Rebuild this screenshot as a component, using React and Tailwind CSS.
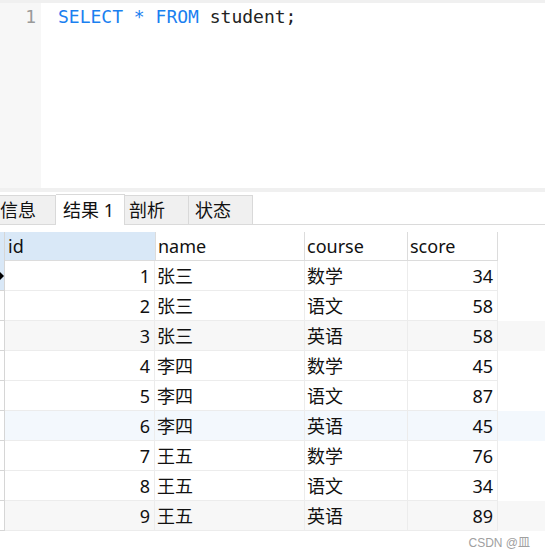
const rows = [
  { id: 1, name: '张三', course: '数学', score: 34 },
  { id: 2, name: '张三', course: '语文', score: 58 },
  { id: 3, name: '张三', course: '英语', score: 58 },
  { id: 4, name: '李四', course: '数学', score: 45 },
  { id: 5, name: '李四', course: '语文', score: 87 },
  { id: 6, name: '李四', course: '英语', score: 45 },
  { id: 7, name: '王五', course: '数学', score: 76 },
  { id: 8, name: '王五', course: '语文', score: 34 },
  { id: 9, name: '王五', course: '英语', score: 89 },
];

// row shading as seen in the result grid
const rowBg = (i) => {
  if (i === 2 || i === 8) return 'bg-[#f7f7f7]';
  if (i === 5) return 'bg-[#f3f8fd]';
  return 'bg-white';
};

const font = { fontFamily: '"Noto Sans", "Noto Sans CJK SC", sans-serif' };

export default function App() {
  return (
    <div className="w-[545px] h-[556px] bg-white relative overflow-hidden text-[#111]" style={font}>
      <div className="h-[3px] bg-[#f0f0f0]" />

      {/* editor */}
      <div className="flex h-[185px]" style={{ fontFamily: '"DejaVu Sans Mono", monospace' }}>
        <div className="w-[41px] bg-[#f7f7f7] text-right pr-[5px] pt-[2px] text-[18px] leading-[24px] text-[#9a9a9a]">1</div>
        <div className="pl-[17px] pt-[2px] text-[18px] leading-[24px] whitespace-pre">
          <span className="text-[#1a80f0]">SELECT</span>
          <span className="text-[#1a80f0]"> * </span>
          <span className="text-[#1a80f0]">FROM</span>
          <span className="text-[#222]"> student;</span>
        </div>
      </div>

      <div className="h-[4px] bg-[#f0f0f0]" />

      {/* tabs */}
      <div className="flex items-end h-[32px] mt-[1px] border-b border-[#dadada] text-[18px] leading-none whitespace-nowrap">
        <div className="w-[67px] -ml-[11px] h-[29px] bg-[#f0f0f0] border border-b-0 border-[#d9d9d9] flex items-center pl-[10px]">信息</div>
        <div className="w-[69px] h-[31px] bg-white border border-l-0 border-b-0 border-[#d9d9d9] flex items-center pl-[7px] -mb-[1px] pb-[1px]">结果 1</div>
        <div className="w-[64px] h-[29px] bg-[#f0f0f0] border border-l-0 border-b-0 border-[#d9d9d9] flex items-center pl-[4px]">剖析</div>
        <div className="w-[64px] h-[29px] bg-[#f0f0f0] border border-l-0 border-b-0 border-[#d9d9d9] flex items-center pl-[6px]">状态</div>
      </div>

      {/* result grid */}
      <div className="mt-[7px] text-[18px] leading-none">
        <div className="flex h-[29px]">
          <div className="w-[5px] bg-[#d9e8f7] border-r border-[#d6d6d6]" />
          <div className="w-[150px] bg-[#d9e8f7] border-b border-[#dcdcdc] flex items-center pl-[3px]">id</div>
          <div className="w-[150px] border-b border-r border-l border-[#dcdcdc] flex items-center pl-[2px]">name</div>
          <div className="w-[103px] border-b border-r border-[#dcdcdc] flex items-center pl-[2px]">course</div>
          <div className="w-[90px] border-b border-r border-[#dcdcdc] flex items-center pl-[2px]">score</div>
        </div>
        {rows.map((r, i) => (
          <div key={r.id} className={`flex h-[30px] ${rowBg(i)}`}>
            <div className={`w-[5px] border-r border-b border-[#d6d6d6] relative ${i === 0 ? 'bg-[#d9e8f7]' : 'bg-white'}`}>
              {i === 0 && (
                <span className="absolute left-0 top-[11px] w-0 h-0 border-y-[4px] border-y-transparent border-l-[4px] border-l-black" />
              )}
            </div>
            <div className="w-[150px] border-b border-r border-[#ececec] flex items-center justify-end pr-[4px]">{r.id}</div>
            <div className="w-[150px] border-b border-r border-[#ececec] flex items-center pl-[2px]">{r.name}</div>
            <div className="w-[103px] border-b border-r border-[#ececec] flex items-center pl-[2px]">{r.course}</div>
            <div className="w-[90px] border-b border-r border-[#ececec] flex items-center justify-end pr-[4px]">{r.score}</div>
          </div>
        ))}
      </div>

      <div className="absolute right-[15px] bottom-[7px] text-[12px] leading-none text-[#a0a0a0]" style={{ fontFamily: '"Liberation Sans", "Noto Sans CJK SC", sans-serif' }}>
        CSDN @皿
      </div>
    </div>
  );
}
